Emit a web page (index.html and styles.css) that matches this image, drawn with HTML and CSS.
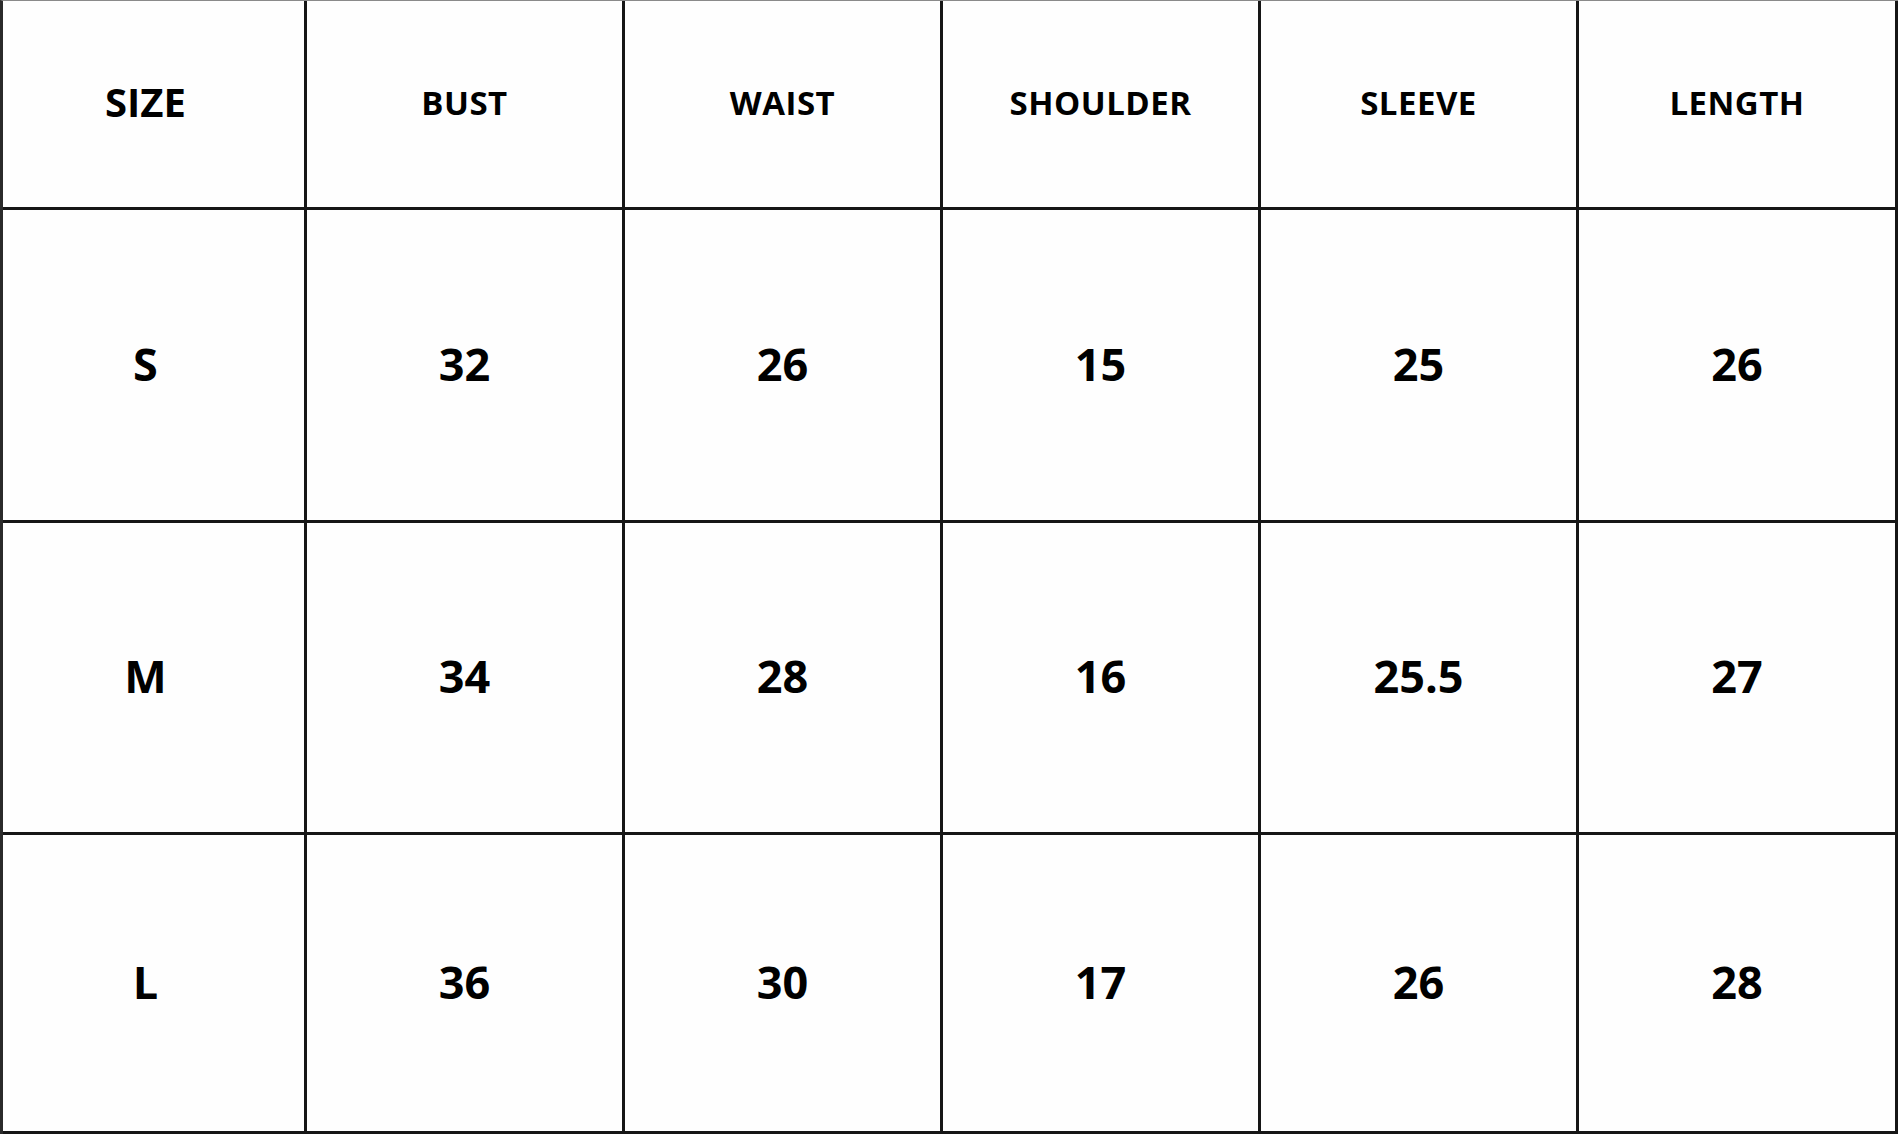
FILE: index.html
```html
<!DOCTYPE html>
<html lang="en">
<head>
<meta charset="utf-8">
<title>Size Chart</title>
<link rel="stylesheet" href="styles.css">
</head>
<body>
<div class="chart">
  <div class="cell first head size-head">SIZE</div>
  <div class="cell head">BUST</div>
  <div class="cell head">WAIST</div>
  <div class="cell head">SHOULDER</div>
  <div class="cell head">SLEEVE</div>
  <div class="cell head last">LENGTH</div>

  <div class="cell first">S</div>
  <div class="cell">32</div>
  <div class="cell">26</div>
  <div class="cell">15</div>
  <div class="cell">25</div>
  <div class="cell last">26</div>

  <div class="cell first">M</div>
  <div class="cell">34</div>
  <div class="cell">28</div>
  <div class="cell">16</div>
  <div class="cell">25.5</div>
  <div class="cell last">27</div>

  <div class="cell first">L</div>
  <div class="cell">36</div>
  <div class="cell">30</div>
  <div class="cell">17</div>
  <div class="cell">26</div>
  <div class="cell last">28</div>
</div>
</body>
</html>
```

FILE: styles.css
```css
html, body {
  margin: 0;
  padding: 0;
  background: #ffffff;
}

.chart {
  display: grid;
  grid-template-columns: 304px 318px 318px 318px 318px 319px;
  grid-template-rows: 209px 313px 312px 299px;
  width: 1898px;
  height: 1134px;
  box-sizing: border-box;
  border-left: 3px solid #2a2a2a;
  border-top: 1px solid #8a8a8a;
  font-family: "Open Sans", "Liberation Sans", sans-serif;
  font-weight: 700;
  color: #000000;
}

.cell {
  display: flex;
  align-items: center;
  justify-content: center;
  border-right: 3px solid #161616;
  border-bottom: 3px solid #161616;
  padding-bottom: 4px;
  font-size: 45px;
  line-height: 1;
  background: #fefefe;
}

.first {
  padding-right: 16px;
}

.head {
  font-size: 33px;
  letter-spacing: 0.5px;
}

.size-head {
  font-size: 40px;
  letter-spacing: 0;
}
```
